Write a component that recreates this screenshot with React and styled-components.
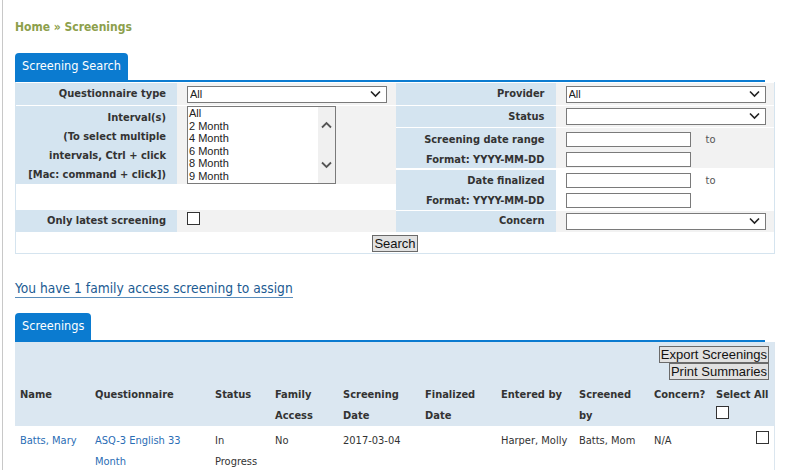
import React from "react";
import styled, { createGlobalStyle } from "styled-components";

const GlobalStyle = createGlobalStyle`
  html, body {
    margin: 0;
    padding: 0;
    background: #fff;
  }
  body {
    font-family: "DejaVu Sans Condensed", "DejaVu Sans", sans-serif;
    font-stretch: condensed;
    color: #333;
    font-size: 11px;
  }
`;

const Page = styled.div`
  margin-left: 2px;
  border-left: 1px solid #c8c8c8;
  padding: 18px 12px 0 12px;
  min-height: 470px;
  box-sizing: border-box;
  width: 775px;
`;

const Breadcrumb = styled.div`
  font-size: 12px;
  font-weight: bold;
  color: #8da04c;
  height: 18px;
  line-height: 18px;
`;

const TabBar = styled.div`
  margin-top: ${({ top }) => top || 0}px;
  display: flex;
  border-bottom: 2px solid #0b7bd0;
`;

const Tab = styled.div`
  background: #0b7bd0;
  color: #fff;
  font-size: 12.6px;
  height: 27px;
  line-height: 25px;
  padding: 0 7px;
  border-radius: 4px 4px 0 0;
`;

const SearchPanel = styled.div`
  border: 1px solid #d5e4ef;
  border-top: none;
  padding-top: 1px;
  width: 760px;
  box-sizing: border-box;
`;

const SearchColumns = styled.div`
  display: flex;
`;

const FieldGrid = styled.div`
  display: grid;
  grid-template-columns: ${({ labelWidth }) => labelWidth}px 1fr;
  row-gap: 1px;
  width: ${({ width }) => width}px;
`;

const Label = styled.div`
  background: ${({ blank }) => (blank ? "#fff" : "#d4e4f0")};
  font-weight: bold;
  text-align: right;
  padding-right: 11px;
  padding-top: ${({ pt }) => pt || 0}px;
  box-sizing: border-box;
  height: ${({ h }) => h}px;
  line-height: ${({ lh }) => lh || 20}px;
  display: flex;
  flex-direction: column;
  justify-content: center;
  align-items: flex-end;
  white-space: nowrap;
`;

const Value = styled.div`
  background: ${({ white }) => (white ? "#fff" : "#f2f2f2")};
  height: ${({ h }) => h}px;
  padding-left: 10px;
  padding-top: ${({ pt }) => pt || 0}px;
  box-sizing: border-box;
  display: flex;
  flex-direction: column;
  justify-content: ${({ top }) => (top ? "flex-start" : "center")};
  gap: ${({ gap }) => gap || 0}px;
`;

const SelectWrap = styled.div`
  position: relative;
  width: 200px;
  height: 17px;
`;

const Select = styled.select`
  appearance: none;
  width: 100%;
  height: 100%;
  border: 1px solid #7a7a7a;
  background: #fff;
  font-family: "Liberation Sans", Arial, sans-serif;
  font-size: 11px;
  color: #222;
  padding: 0 0 0 2px;
  margin: 0;
  border-radius: 0;
  outline: none;
`;

const Chevron = styled.svg`
  position: absolute;
  right: 6px;
  top: 4px;
  pointer-events: none;
`;

const Listbox = styled.div`
  display: flex;
  width: 149px;
  height: 78px;
  border: 1px solid #7a7a7a;
  box-sizing: border-box;
  background: #fff;
`;

const Options = styled.div`
  flex: 1;
  font-family: "Liberation Sans", Arial, sans-serif;
  font-size: 11px;
  color: #222;
  line-height: 12.6px;
  padding-left: 1px;
  overflow: hidden;
`;

const ScrollTrack = styled.div`
  width: 17px;
  background: #f0f0f0;
  display: flex;
  flex-direction: column;
  justify-content: space-between;
  align-items: center;
  padding: 14px 0 14px;
`;

const DateLine = styled.div`
  display: flex;
  align-items: center;
  gap: 15px;
  color: #555;
`;

const TextInput = styled.input`
  width: 125px;
  height: 15px;
  box-sizing: border-box;
  border: 1px solid #7a7a7a;
  margin: 0;
  padding: 0;
`;

const Check = styled.span`
  display: inline-block;
  width: 13px;
  height: 13px;
  box-sizing: border-box;
  border: 1px solid #333;
  background: #fff;
  margin-top: ${({ mt }) => mt || 0}px;
`;

const SearchRow = styled.div`
  display: flex;
  justify-content: center;
  padding: 3px 0 1px;
`;

const NativeButton = styled.button`
  font-family: "Liberation Sans", Arial, sans-serif;
  font-size: 13px;
  color: #111;
  background: #e1e1e1;
  border: 1px solid #6a6a6a;
  padding: 0 1px;
  margin: 0;
  height: 17px;
  line-height: 15px;
  border-radius: 0;
`;

const AssignLink = styled.a`
  display: inline-block;
  margin-top: 26px;
  font-size: 13.7px;
  color: #1c5b92;
  text-decoration: none;
  border-bottom: 1px solid #5a8dbb;
  line-height: 17px;
`;

const Grid = styled.div`
  width: 759px;
  border-right: 1px solid #dbe6ef;
`;

const GridHead = styled.div`
  background: #dbe7f1;
  padding-top: 4px;
`;

const ButtonStack = styled.div`
  display: flex;
  flex-direction: column;
  align-items: flex-end;
  padding-right: 5px;
`;

const Row = styled.div`
  display: grid;
  grid-template-columns: 75px 120px 60px 68px 82px 76px 78px 75px 62px 1fr;
  padding-top: ${({ pt }) => pt || 0}px;
  height: ${({ h }) => h}px;
  box-sizing: border-box;
`;

const HeadCell = styled.div`
  font-weight: bold;
  padding-left: 5px;
  line-height: 21px;
`;

const Cell = styled.div`
  padding-left: 5px;
  line-height: 21px;
  color: ${({ link }) => (link ? "#2a6db5" : "#333")};
  text-align: ${({ right }) => (right ? "right" : "left")};
  padding-right: ${({ right }) => (right ? 5 : 0)}px;
`;

const SelectAllCell = styled(HeadCell)`
  display: flex;
  flex-direction: column;
  align-items: flex-start;
`;

const ChevronDown = ({ top = 4 }) => (
  <Chevron width="11" height="8" viewBox="0 0 11 8" style={{ top }}>
    <path d="M1 1.5 L5.5 6 L10 1.5" fill="none" stroke="#222" strokeWidth="1.6" />
  </Chevron>
);

const Dropdown = ({ value }) => (
  <SelectWrap>
    <Select defaultValue={value}>
      <option>{value}</option>
    </Select>
    <ChevronDown />
  </SelectWrap>
);

const intervals = ["All", "2 Month", "4 Month", "6 Month", "8 Month", "9 Month"];

const columns = [
  ["Name"],
  ["Questionnaire"],
  ["Status"],
  ["Family", "Access"],
  ["Screening", "Date"],
  ["Finalized", "Date"],
  ["Entered by"],
  ["Screened", "by"],
  ["Concern?"],
];

export default function App() {
  return (
    <>
      <GlobalStyle />
      <Page>
        <Breadcrumb>Home » Screenings</Breadcrumb>

        <TabBar top={17}>
          <Tab>Screening Search</Tab>
        </TabBar>
        <SearchPanel>
          <SearchColumns>
            <FieldGrid labelWidth={161} width={380}>
              <Label h={22}>Questionnaire type</Label>
              <Value h={22}>
                <Dropdown value="All" />
              </Value>

              <Label h={78} lh={19} pt={2}>
                <span>Interval(s)</span>
                <span>(To select multiple</span>
                <span>intervals, Ctrl + click</span>
                <span>[Mac: command + click])</span>
              </Label>
              <Value h={78} top>
                <Listbox>
                  <Options>
                    {intervals.map((i) => (
                      <div key={i}>{i}</div>
                    ))}
                  </Options>
                  <ScrollTrack>
                    <svg width="11" height="8" viewBox="0 0 11 8">
                      <path d="M1 6.5 L5.5 2 L10 6.5" fill="none" stroke="#555" strokeWidth="1.8" />
                    </svg>
                    <svg width="11" height="8" viewBox="0 0 11 8">
                      <path d="M1 1.5 L5.5 6 L10 1.5" fill="none" stroke="#555" strokeWidth="1.8" />
                    </svg>
                  </ScrollTrack>
                </Listbox>
              </Value>

              <Label h={24} blank />
              <Value h={24} white />

              <Label h={22}>Only latest screening</Label>
              <Value h={22} top>
                <Check mt={2} />
              </Value>
            </FieldGrid>

            <FieldGrid labelWidth={160} width={379}>
              <Label h={22}>Provider</Label>
              <Value h={22}>
                <Dropdown value="All" />
              </Value>

              <Label h={21}>Status</Label>
              <Value h={21}>
                <Dropdown value="" />
              </Value>

              <Label h={40} pt={3}>
                <span>Screening date range</span>
                <span>Format: YYYY-MM-DD</span>
              </Label>
              <Value h={40} gap={5} pt={2}>
                <DateLine>
                  <TextInput />
                  <span>to</span>
                </DateLine>
                <DateLine>
                  <TextInput />
                </DateLine>
              </Value>

              <Label h={40} pt={3}>
                <span>Date finalized</span>
                <span>Format: YYYY-MM-DD</span>
              </Label>
              <Value h={40} gap={5} pt={2} white>
                <DateLine>
                  <TextInput />
                  <span>to</span>
                </DateLine>
                <DateLine>
                  <TextInput />
                </DateLine>
              </Value>

              <Label h={21}>Concern</Label>
              <Value h={21}>
                <Dropdown value="" />
              </Value>
            </FieldGrid>
          </SearchColumns>
          <SearchRow>
            <NativeButton>Search</NativeButton>
          </SearchRow>
        </SearchPanel>

        <AssignLink href="#">You have 1 family access screening to assign</AssignLink>

        <TabBar top={15}>
          <Tab>Screenings</Tab>
        </TabBar>
        <Grid>
          <GridHead>
            <ButtonStack>
              <NativeButton>Export Screenings</NativeButton>
              <NativeButton>Print Summaries</NativeButton>
            </ButtonStack>
            <Row pt={4} h={46}>
              {columns.map((c) => (
                <HeadCell key={c[0]}>
                  {c.map((l) => (
                    <div key={l}>{l}</div>
                  ))}
                </HeadCell>
              ))}
              <SelectAllCell>
                <span>Select All</span>
                <Check mt={1} />
              </SelectAllCell>
            </Row>
          </GridHead>
          <Row pt={4} h={48}>
            <Cell link>Batts, Mary</Cell>
            <Cell link>
              ASQ-3 English 33
              <br />
              Month
            </Cell>
            <Cell>
              In
              <br />
              Progress
            </Cell>
            <Cell>No</Cell>
            <Cell>2017-03-04</Cell>
            <Cell />
            <Cell>Harper, Molly</Cell>
            <Cell>Batts, Mom</Cell>
            <Cell>N/A</Cell>
            <Cell right>
              <Check mt={1} />
            </Cell>
          </Row>
        </Grid>
      </Page>
    </>
  );
}
